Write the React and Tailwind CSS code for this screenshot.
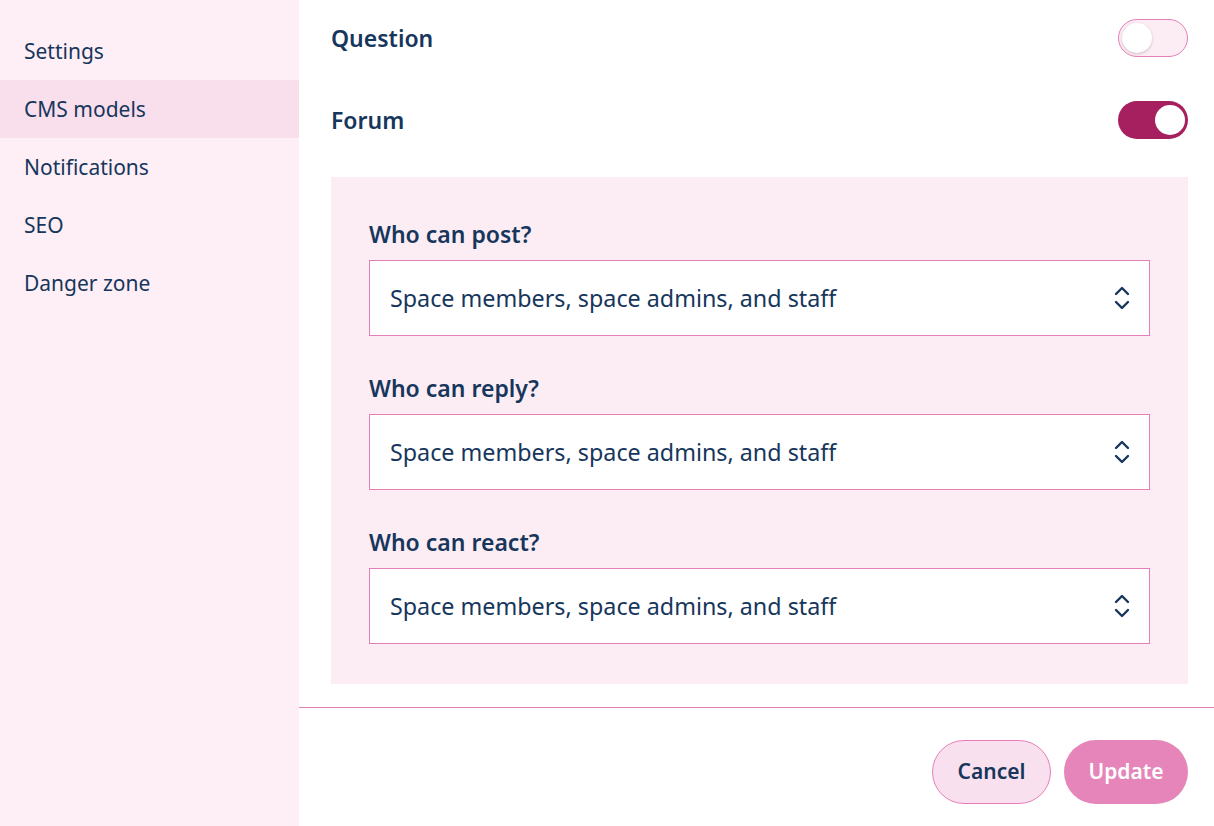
const NAV = ["Settings", "CMS models", "Notifications", "SEO", "Danger zone"];

const FIELDS = ["Who can post?", "Who can reply?", "Who can react?"];

function Toggle({ on }) {
  return (
    <div
      className={`flex h-[38px] w-[70px] items-center rounded-full px-[3px] ${
        on ? "justify-end bg-[#a6205f]" : "justify-start border border-[#e67fb9] bg-[#fcedf4]"
      }`}
    >
      <span
        className={`block h-[30px] w-[30px] rounded-full bg-white ${on ? "" : "shadow-[0_1px_3px_rgba(0,0,0,0.2)]"}`}
      />
    </div>
  );
}

function Chevrons() {
  return (
    <svg width="18" height="26" viewBox="0 0 18 26" fill="none" stroke="#17365c" strokeWidth="2.4" strokeLinecap="round" strokeLinejoin="round">
      <path d="M3 9l6-6 6 6" />
      <path d="M3 17l6 6 6-6" />
    </svg>
  );
}

export default function App() {
  return (
    <div className="flex h-[826px] w-[1214px] bg-white font-['Noto_Sans',sans-serif] text-[#17365c]">
      <aside className="w-[299px] shrink-0 bg-[#fdeff5] pt-[22px]">
        {NAV.map((n) => (
          <div
            key={n}
            className={`flex h-[58px] items-center pl-6 pt-[2px] text-[21px] ${n === "CMS models" ? "bg-[#f9dfec]" : ""}`}
          >
            {n}
          </div>
        ))}
      </aside>
      <main className="flex flex-1 flex-col">
        <div className="pl-8 pr-[26px]">
          <div className="flex h-[77px] items-center justify-between pb-[1px]">
            <span className="text-[23px] font-semibold">Question</span>
            <Toggle on={false} />
          </div>
          <div className="flex h-[86px] items-center justify-between">
            <span className="text-[23px] font-semibold">Forum</span>
            <Toggle on />
          </div>
          <div className="mt-[14px] flex flex-col bg-[#fcedf4] px-[38px] pb-10 pt-[39px]">
            {FIELDS.map((f, i) => (
              <div key={f} className={i ? "mt-[34px]" : ""}>
                <div className="mb-2 text-[23px] font-semibold leading-[36px]">{f}</div>
                <div className="flex h-[76px] items-center justify-between border border-[#e67fb9] bg-white pl-5 pr-[18px] text-[23.3px]">
                  <span>Space members, space admins, and staff</span>
                  <Chevrons />
                </div>
              </div>
            ))}
          </div>
        </div>
        <div className="mt-[23px] border-t border-[#e67fb9]" />
        <div className="flex justify-end gap-[13px] pr-[26px] pt-8">
          <button className="h-[64px] w-[119px] rounded-full border border-[#e67fb9] bg-[#f9e0ee] text-[21px] font-semibold text-[#17365c]">
            Cancel
          </button>
          <button className="h-[64px] w-[124px] rounded-full bg-[#e585b9] text-[21px] font-semibold text-white">
            Update
          </button>
        </div>
      </main>
    </div>
  );
}
